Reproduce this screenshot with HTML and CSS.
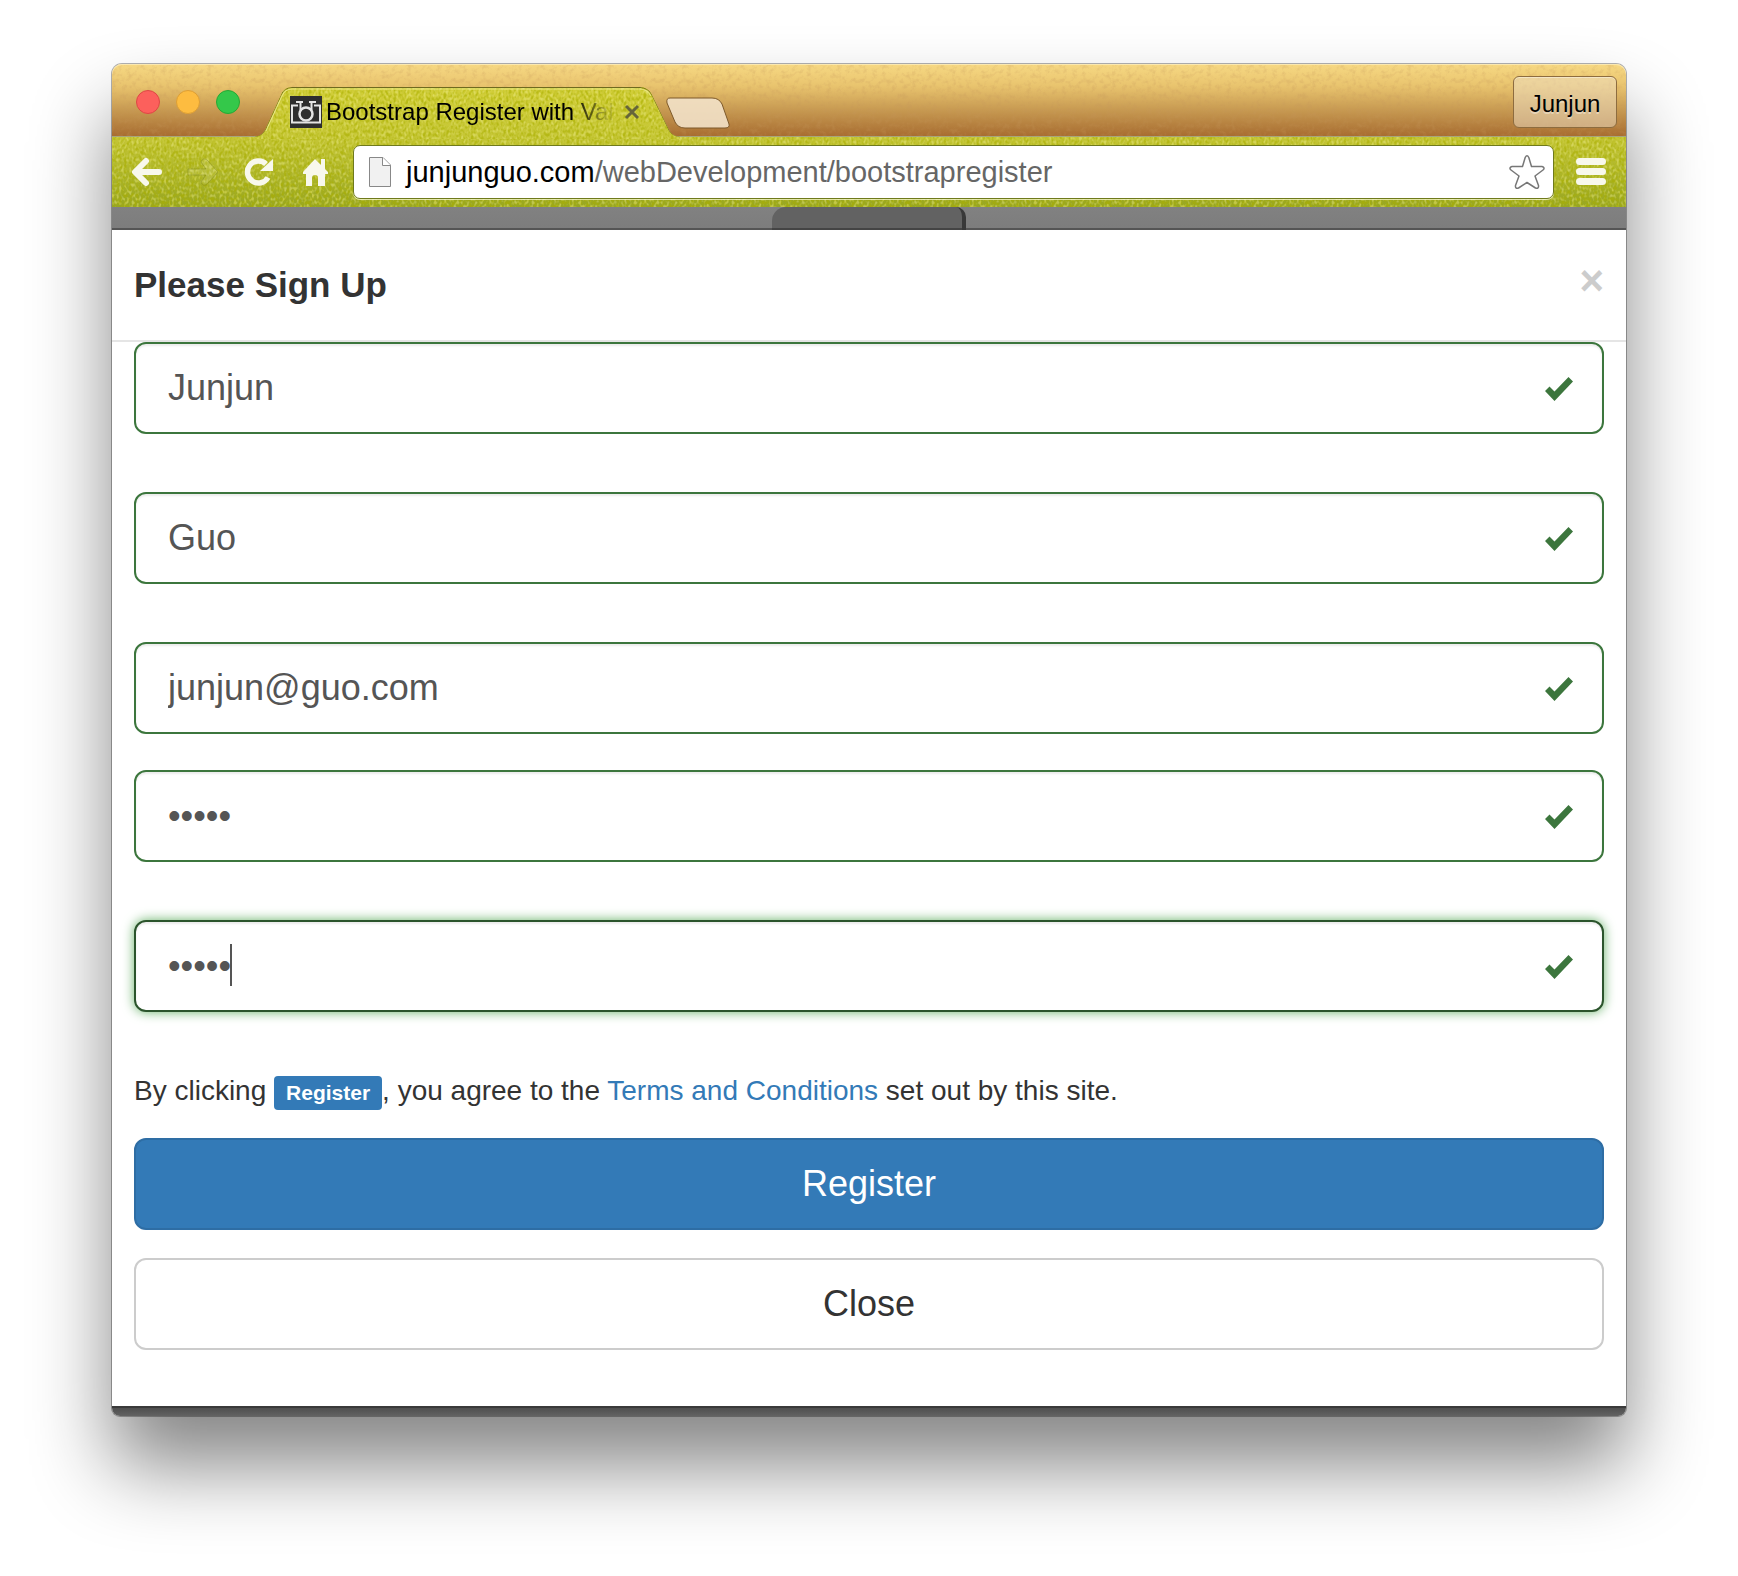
FILE: index.html
```html
<!DOCTYPE html>
<html lang="en">
<head>
<meta charset="utf-8">
<title>Bootstrap Register with Validation</title>
<link rel="stylesheet" href="styles.css">
</head>
<body>
<div class="window">
  <div class="titlebar">
    <div class="lights"><span class="light red"></span><span class="light amber"></span><span class="light green"></span></div>
    <div class="tab">
      <svg class="tab-edge" viewBox="0 0 426 52" aria-hidden="true"><path d="M0 49.500Q8 49 11 43L27 8Q30 .5 38 .5H386Q394 .5 398 8L415 43Q418 49 426 49.500" fill="none" stroke="#6f6a1e"/><path d="M12 44L28 9Q31 2 38 2H386Q393 2 397 9" fill="none" stroke="#f0eda0" stroke-opacity=".8"/></svg>
      <svg class="favicon" viewBox="0 0 32 32" aria-hidden="true"><rect width="32" height="32" fill="#2e2e2e"/><g fill="none" stroke="#e4e4e4" stroke-width="2"><path d="M8 9.500H2V26.500H30V9.500H24"/><path d="M6 6H13M19 6H26M10.500 6V14M21.500 6V14"/><circle cx="16" cy="18" r="6.500" fill="#2e2e2e" stroke-width="2.500"/></g></svg>
      <span class="tab-title">Bootstrap Register with Val</span>
      <button class="tab-close" aria-label="Close tab"><svg width="16" height="16" viewBox="0 0 16 16"><path d="M2 2l12 12M14 2L2 14" stroke="#66653a" stroke-width="3"/></svg></button>
    </div>
    <button class="new-tab" aria-label="New tab"><svg width="64" height="32" viewBox="0 0 64 32"><path d="M4 1H46Q53 1 56 7L63 27Q64 31 59 31H19Q12 31 9 25L1 6Q0 1 4 1Z" fill="#f2e1c8" fill-opacity=".9" stroke="#7d592a"/></svg></button>
    <button class="profile">Junjun</button>
  </div>
  <div class="toolbar">
    <button class="nav" aria-label="Back"><svg width="32" height="32" viewBox="0 0 32 32"><path d="M15 5L4 16l11 11M5 16h23" fill="none" stroke="#f8f8ec" stroke-width="6" stroke-linecap="round" stroke-linejoin="round"/></svg></button>
    <button class="nav" aria-label="Forward" disabled><svg width="32" height="32" viewBox="0 0 32 32"><path d="M1 13H19L14 6Q16 1 20 4L31 16L20 28Q16 31 14 26L19 19H1Z" fill="#f8f8d0" fill-opacity=".14" stroke="#7d8420" stroke-opacity=".45"/></svg></button>
    <button class="nav" aria-label="Reload"><svg width="32" height="32" viewBox="0 0 32 32"><path d="M25 21.500A11 11 0 1 1 23 8" fill="none" stroke="#f8f8ec" stroke-width="5.500"/><path d="M30 3V15H17Z" fill="#f8f8ec"/></svg></button>
    <button class="nav" aria-label="Home"><svg width="32" height="32" viewBox="0 0 32 32"><path d="M16 3L22 9V3H26V13L29 16V18H26V30H19V22Q19 19 16 19T13 22V30H7V18H4V16Z" fill="#f8f8ec"/></svg></button>
    <div class="omnibox">
      <svg width="22" height="32" viewBox="0 0 22 32" aria-hidden="true"><path d="M.5 1.500H14L21.500 9V30.500H.5Z" fill="#f1f1f1" stroke="#888"/><path d="M13.500 1.500V9.500H21.500" fill="#fff" stroke="#888"/></svg>
      <a class="url" href="#"><span class="host">junjunguo.com</span>/webDevelopment/bootstrapregister</a>
      <button class="star" aria-label="Bookmark this page"><svg width="36" height="36" viewBox="0 0 36 36"><path d="M16.200 3.500Q18 0 19.800 3.500L22.500 12.500H33Q36.500 13.500 34 16L26 22L29.500 31.500Q30 35 26.500 34L18 28.500L9.500 34Q6 35 6.500 31.500L10 22L2 16Q-.5 13.500 3 12.500H13.500Z" fill="#fff" stroke="#777" stroke-width="1.500" stroke-linejoin="round"/></svg></button>
    </div>
    <button class="menu" aria-label="Menu"><svg width="30" height="28" viewBox="0 0 30 28"><path d="M3.500 3.500h23M3.500 13.500h23M3.500 23.500h23" stroke="#f8f8ec" stroke-width="7" stroke-linecap="round"/></svg></button>
  </div>
  <div class="backdrop"><div class="behind"></div></div>
  <form class="modal" role="dialog" aria-labelledby="modal-title">
    <div class="modal-header">
      <h1 class="modal-title" id="modal-title">Please Sign Up</h1>
      <button type="button" class="dismiss" aria-label="Close">×</button>
    </div>
    <div class="modal-body">
      <div class="field"><input type="text" aria-label="First name" value="Junjun"><svg class="ok" viewBox="0 0 28 24"><path d="M0 14L4.500 9.500L9.500 14.500L23.500 0L28 4.500L9.500 24Z"/></svg></div>
      <div class="field"><input type="text" aria-label="Last name" value="Guo"><svg class="ok" viewBox="0 0 28 24"><path d="M0 14L4.500 9.500L9.500 14.500L23.500 0L28 4.500L9.500 24Z"/></svg></div>
      <div class="field field-tight"><input type="email" aria-label="Email address" value="junjun@guo.com"><svg class="ok" viewBox="0 0 28 24"><path d="M0 14L4.500 9.500L9.500 14.500L23.500 0L28 4.500L9.500 24Z"/></svg></div>
      <div class="field"><input type="password" aria-label="Password" value="12345"><svg class="ok" viewBox="0 0 28 24"><path d="M0 14L4.500 9.500L9.500 14.500L23.500 0L28 4.500L9.500 24Z"/></svg></div>
      <div class="field active"><input type="password" aria-label="Confirm password" value="12345"><span class="caret"></span><svg class="ok" viewBox="0 0 28 24"><path d="M0 14L4.500 9.500L9.500 14.500L23.500 0L28 4.500L9.500 24Z"/></svg></div>
      <p class="terms">By clicking <strong class="label">Register</strong>, you agree to the <a href="#">Terms and Conditions</a> set out by this site.</p>
      <button type="submit" class="btn primary">Register</button>
      <button type="button" class="btn">Close</button>
    </div>
  </form>
</div>
</body>
</html>
```
FILE: styles.css
```css
* { box-sizing: border-box; }
:root {
  --noise: url("data:image/svg+xml,%3Csvg xmlns='http://www.w3.org/2000/svg' width='200' height='200'%3E%3Cfilter id='n'%3E%3CfeTurbulence type='fractalNoise' baseFrequency='.4 .28' numOctaves='1' stitchTiles='stitch'/%3E%3CfeColorMatrix values='0 0 0 0 .9 0 0 0 0 .88 0 0 0 0 .3 4 0 0 0 -1.900'/%3E%3C/filter%3E%3Crect width='200' height='200' filter='url(%23n)' opacity='.4'/%3E%3C/svg%3E");
  --noise-dark: url("data:image/svg+xml,%3Csvg xmlns='http://www.w3.org/2000/svg' width='200' height='200'%3E%3Cfilter id='n'%3E%3CfeTurbulence type='fractalNoise' baseFrequency='.4 .28' numOctaves='1' seed='8' stitchTiles='stitch'/%3E%3CfeColorMatrix values='0 0 0 0 .4 0 0 0 0 .43 0 0 0 0 0 4 0 0 0 -1.700'/%3E%3C/filter%3E%3Crect width='200' height='200' filter='url(%23n)' opacity='.6'/%3E%3C/svg%3E");
  --grain: url("data:image/svg+xml,%3Csvg xmlns='http://www.w3.org/2000/svg' width='200' height='200'%3E%3Cfilter id='n'%3E%3CfeTurbulence type='fractalNoise' baseFrequency='.2' numOctaves='3' stitchTiles='stitch'/%3E%3CfeColorMatrix values='0 0 0 0 .55 0 0 0 0 .3 0 0 0 0 .1 3 0 0 0 -1.400'/%3E%3C/filter%3E%3Crect width='200' height='200' filter='url(%23n)' opacity='.25'/%3E%3C/svg%3E");
}
body {
  margin: 0;
  padding: 64px 112px 160px;
  background: #fff;
  color: #333;
  font-family: "Liberation Sans", Arial, sans-serif;
}
button, input { font: inherit; color: inherit; }
button { display: flex; align-items: center; justify-content: center; margin: 0; padding: 0; border: 0; background: none; }
svg { display: block; flex: none; }
a { color: #337ab7; text-decoration: none; }

.window {
  border-radius: 10px 10px 8px 8px;
  background: linear-gradient(#4a4a4a, #626262) bottom / 100% 10px no-repeat;
  box-shadow: 0 0 0 1px rgba(0,0,0,.3), 0 50px 80px rgba(0,0,0,.48);
  padding-bottom: 8px;
}

.titlebar {
  display: flex;
  align-items: flex-start;
  height: 73px;
  padding: 0 9px 0 24px;
  border-radius: 10px 10px 0 0;
  border-bottom: 1px solid #a8a67a;
  background: var(--grain), linear-gradient(#f7d983, #e9c46e 30%, #c69850 65%, #a86d31);
  box-shadow: inset 0 1px #fbe8b0;
}
.lights { display: flex; gap: 16px; padding-top: 26px; }
.light { width: 24px; height: 24px; border: 1px solid; border-radius: 50%; }
.red { background: #fc605c; border-color: #df4744; }
.amber { background: #fdbc40; border-color: #de9f34; }
.green { background: #34c84a; border-color: #26a934; }
.tab {
  position: relative;
  display: flex;
  align-items: center;
  width: 426px;
  height: 52px;
  margin: 23px 0 0 14px;
  padding: 0 40px 2px 36px;
  background: var(--noise), var(--noise-dark), linear-gradient(#d2ce38, #c5c636);
  clip-path: path("M0 50Q8 49 11 43L27 8Q30 0 38 0H386Q394 0 398 8L415 43Q418 49 426 50V52H0Z");
}
.tab-edge { position: absolute; inset: 0; width: 426px; height: 52px; }
.favicon { width: 32px; height: 32px; }
.tab-title {
  flex: 1;
  margin: 0 4px;
  white-space: nowrap;
  font-size: 24px;
  line-height: 32px;
  color: transparent;
  background: linear-gradient(90deg, #000 84%, rgba(0,0,0,.1) 96%) text;
  -webkit-background-clip: text;
}
.new-tab { margin: 33px auto 0 -14px; }
.profile {
  width: 104px;
  height: 52px;
  margin-top: 12px;
  padding-top: 4px;
  border: 1px solid #8d6c3f;
  border-radius: 6px;
  background: rgba(238,224,200,.5);
  box-shadow: inset 0 1px rgba(255,255,255,.4);
  color: #000;
  font-size: 24px;
  text-shadow: 0 2px rgba(255,255,255,.4);
}

.toolbar {
  display: flex;
  align-items: center;
  gap: 24px;
  height: 70px;
  padding: 0 20px 0 19px;
  background: var(--noise), var(--noise-dark), linear-gradient(#c5c636, #98a620);
}
.omnibox {
  flex: 1;
  display: flex;
  align-items: center;
  min-width: 0;
  height: 54px;
  margin: 0 -2px;
  padding: 0 8px 0 15px;
  border: 1px solid #6f7a1c;
  border-radius: 7px;
  background: #fff;
  box-shadow: 0 1px rgba(255,255,230,.7);
}
.url { flex: 1; margin-left: 15px; font-size: 29px; line-height: 36px; color: #666; white-space: nowrap; }
.host { color: #000; }

.backdrop { display: flex; justify-content: center; height: 23px; background: linear-gradient(#818181, #7d7d7d 90%, #555 92%); }
.behind { width: 194px; height: 23px; border-right: 4px solid #383838; border-radius: 14px 10px 0 0; background: linear-gradient(#626262 90%, #444 92%); }

.modal { display: block; margin: 0; background: #fff; border-bottom: 2px solid #3a3a3a; }
.modal-header { display: flex; justify-content: space-between; height: 112px; padding: 30px 22px; border-bottom: 2px solid #e5e5e5; }
.modal-title { margin: 0; font-size: 35px; font-weight: 700; line-height: 50px; }
.dismiss { height: 42px; color: #ccc; font-size: 42px; font-weight: 700; line-height: 42px; }
.modal-body { padding: 0 22px 56px; }

.field { position: relative; margin-bottom: 58px; }
.field-tight { margin-bottom: 36px; }
.field input {
  display: block;
  width: 100%;
  height: 92px;
  padding: 0 96px 0 32px;
  border: 2px solid #3c763d;
  border-radius: 12px;
  outline: 0;
  background: #fff;
  box-shadow: inset 0 2px 2px rgba(0,0,0,.075);
  color: #555;
  font-size: 36px;
}
.field.active input { border-color: #2b542c; box-shadow: inset 0 2px 2px rgba(0,0,0,.075), 0 0 12px #67b168; }
.ok { position: absolute; top: 35px; right: 31px; width: 28px; height: 24px; fill: #3c763d; }
.caret { position: absolute; top: 24px; left: 96px; width: 2px; height: 42px; background: #555; }

.terms { margin: 0 0 26px; font-size: 28px; line-height: 42px; }
.label { display: inline-block; padding: 0 12px; border-radius: 4px; background: #337ab7; color: #fff; font-size: 21px; line-height: 34px; }
.btn {
  width: 100%;
  height: 92px;
  border: 2px solid #ccc;
  border-radius: 12px;
  background: #fff;
  font-size: 36px;
}
.btn.primary { margin-bottom: 28px; border-color: #2e6da4; background: #337ab7; color: #fff; }
```
